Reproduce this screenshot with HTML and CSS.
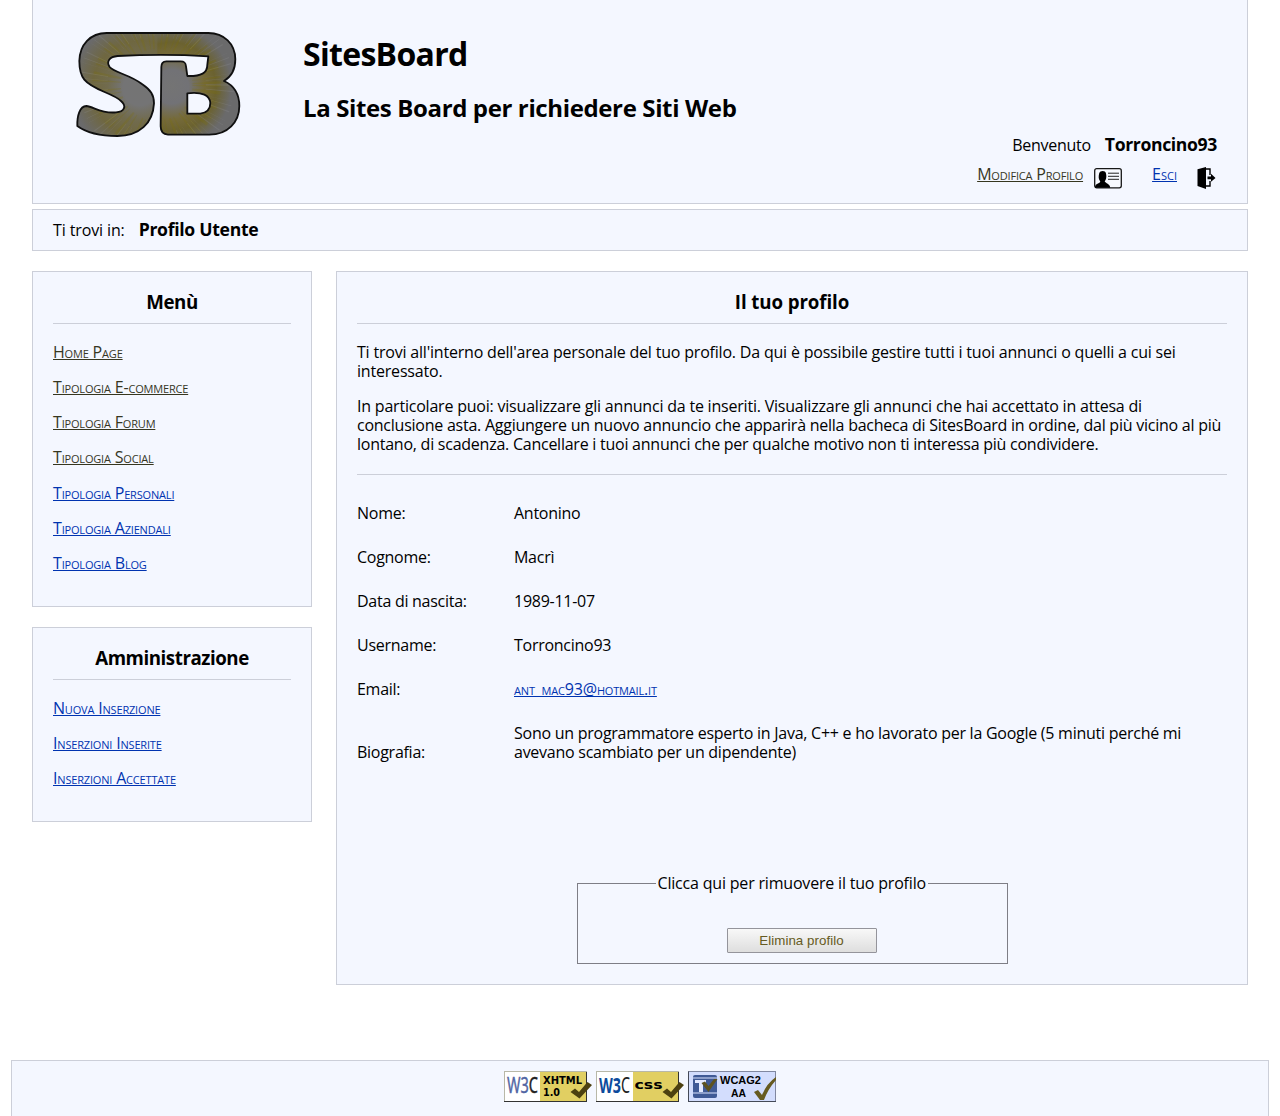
FILE: index.html
```html
<!DOCTYPE html>
<html lang="it">
<head>
<meta charset="utf-8">
<title>SitesBoard - Profilo Utente</title>
<link rel="stylesheet" href="styles.css">
</head>
<body>
<header class="box header">
  <svg class="logo" viewBox="165 90 500 325" role="img" aria-label="SitesBoard">
    <defs>
      <radialGradient id="glowS" gradientUnits="userSpaceOnUse" cx="360" cy="265" r="205">
        <stop offset="0" stop-color="#747474"/><stop offset=".25" stop-color="#747475"/><stop offset=".48" stop-color="#716b4d"/><stop offset=".7" stop-color="#6f6740"/><stop offset="1" stop-color="#6a6a6b"/>
      </radialGradient>
      <radialGradient id="glowB" gradientUnits="userSpaceOnUse" cx="455" cy="260" r="205">
        <stop offset="0" stop-color="#747474"/><stop offset=".25" stop-color="#727276"/><stop offset=".48" stop-color="#756a3a"/><stop offset=".65" stop-color="#6b6230"/><stop offset=".88" stop-color="#6a6a6b"/>
      </radialGradient>
      <clipPath id="right"><rect x="412" y="80" width="260" height="340"/></clipPath>
      <clipPath id="shape"><use href="#sb" clip-rule="evenodd"/></clipPath>
      <path id="sb" d="M260 99H565C612 99 646 132 646 178C646 209 633 231 612 243C641 256 658 283 658 318C658 366 623 404 568 404H444C428 403 422 395 422 379L424 201C424 189 429 184 439 184H482C494 184 497 188 498 199L502 228C544 229 562 219 562 194L565 169C470 163 390 163 293 168C268 170 258 185 269 201C282 218 331 224 367 253C392 270 402 285 402 310C399 370 358 408 292 408C244 408 202 400 172 378C171 348 179 319 199 318C221 320 245 342 288 337C313 336 321 318 303 303C279 279 219 271 193 239C182 225 178 208 178 183C179 134 211 99 260 99ZM502 280V341H541C562 338 571 326 571 309C569 286 548 275 502 280Z"/>
    </defs>
    <use href="#sb" fill="url(#glowS)" fill-rule="evenodd"/>
    <use href="#sb" fill="url(#glowB)" fill-rule="evenodd" clip-path="url(#right)"/>
    <g clip-path="url(#shape)" fill="none" stroke-width="85">
      <circle cx="410" cy="255" r="150" stroke="#807300" stroke-opacity=".22" stroke-dasharray="4 11 8 17 3 9 6 22"/>
      <circle cx="410" cy="255" r="190" stroke="#96969b" stroke-opacity=".22" stroke-dasharray="2 13 3 22 1 10"/>
    </g>
    <use href="#sb" fill="none" stroke="#101010" stroke-width="5.5" stroke-linejoin="round"/>
  </svg>
  <div class="titles">
    <h1>SitesBoard</h1>
    <h2>La Sites Board per richiedere Siti Web</h2>
  </div>
  <div class="account">
    <p class="welcome"><span>Benvenuto</span><strong>Torroncino93</strong></p>
    <div class="actions">
      <a class="visited edit" href="#">Modifica Profilo</a>
      <svg class="card-icon" width="28" height="21" viewBox="0 0 28 21"><rect x=".7" y=".7" width="26.6" height="19.1" rx="2" fill="#f8faff" stroke="#171717" stroke-width="1.3"/><path d="M1 19.7C1 15 6 15.8 6.3 13.5C4.5 11.5 4.3 8.5 5.2 5.2C6 2.4 11.3 2 12 5.4C12.9 9 12 11.7 10.7 13.5C11.5 15.2 16 15.6 16.2 19.7Z"/><path d="M14 5.2H25M14 8.3H25M14 11.3H25" stroke="#222" stroke-width="1"/></svg>
      <a class="exit" href="#">Esci</a>
      <svg class="exit-icon" width="19" height="22" viewBox="0 0 19 22"><path d="M.5 2.2L9 0V22L.5 19Z"/><path d="M9 2H13V8M13 14V19H9" fill="none" stroke="#000" stroke-width="1.4"/><path d="M10.500 9.600H14V6.800L18.500 11L14 14.800V12.300H10.500Z"/></svg>
    </div>
  </div>
</header>
<nav class="box crumb"><span>Ti trovi in:</span><strong>Profilo Utente</strong></nav>
<div class="columns">
  <aside class="sidebar">
    <section class="box panel">
      <h3>Menù</h3>
      <ul>
        <li><a class="visited" href="#">Home Page</a></li>
        <li><a class="visited" href="#">Tipologia E-commerce</a></li>
        <li><a class="visited" href="#">Tipologia Forum</a></li>
        <li><a class="visited" href="#">Tipologia Social</a></li>
        <li><a href="#">Tipologia Personali</a></li>
        <li><a href="#">Tipologia Aziendali</a></li>
        <li><a href="#">Tipologia Blog</a></li>
      </ul>
    </section>
    <section class="box panel">
      <h3>Amministrazione</h3>
      <ul>
        <li><a href="#">Nuova Inserzione</a></li>
        <li><a href="#">Inserzioni Inserite</a></li>
        <li><a href="#">Inserzioni Accettate</a></li>
      </ul>
    </section>
  </aside>
  <main class="box content">
    <h3>Il tuo profilo</h3>
    <div class="intro">
      <p class="lead">Ti trovi all'interno dell'area personale del tuo profilo. Da qui è possibile gestire tutti i tuoi annunci o quelli a cui sei<br>interessato.</p>
      <p class="details"><span class="first">In particolare puoi: visualizzare gli annunci da te inseriti. Visualizzare gli annunci che hai accettato in attesa di</span><br>conclusione asta. Aggiungere un nuovo annuncio che apparirà nella bacheca di SitesBoard in ordine, dal più vicino al più<br>lontano, di scadenza. Cancellare i tuoi annunci che per qualche motivo non ti interessa più condividere.</p>
    </div>
    <dl class="data">
      <dt>Nome:</dt><dd>Antonino</dd>
      <dt>Cognome:</dt><dd>Macrì</dd>
      <dt>Data di nascita:</dt><dd>1989-11-07</dd>
      <dt>Username:</dt><dd>Torroncino93</dd>
      <dt>Email:</dt><dd><a href="#">ant_mac93@hotmail.it</a></dd>
      <dt>Biografia:</dt><dd class="bio">Sono un programmatore esperto in Java, C++ e ho lavorato per la Google (5 minuti perché mi<br>avevano scambiato per un dipendente)</dd>
    </dl>
    <fieldset>
      <legend>Clicca qui per rimuovere il tuo profilo</legend>
      <button type="button">Elimina profilo</button>
    </fieldset>
  </main>
</div>
<footer class="box footer">
  <svg width="88" height="31" viewBox="0 0 88 31">
    <rect width="83" height="31" fill="#b8b8a8"/><rect x="1" y="1" width="81" height="29" fill="#fff"/><rect x="36" y="1" width="46" height="29" fill="#e1cf62"/><path d="M0 30.5H83M82.5 1V31" stroke="#333" fill="none"/>
    <text class="w3 outlined" x="3" y="22" textLength="31" lengthAdjust="spacingAndGlyphs" fill="#5266a4" stroke="#5266a4">W3<tspan fill="#222" stroke="#222">C</tspan></text>
    <text class="tag" x="39" y="13" textLength="39" lengthAdjust="spacingAndGlyphs">XHTML</text><text class="tag" x="39" y="24.500" textLength="17" lengthAdjust="spacingAndGlyphs">1.0</text>
    <path d="M66.500 21L71 17.500L75 21L83.500 11L88 14L75.500 27.500Z" fill="#4c4010"/>
  </svg>
  <svg width="88" height="31" viewBox="0 0 88 31">
    <rect width="83" height="31" fill="#b8b8a8"/><rect x="1" y="1" width="81" height="29" fill="#fff"/><rect x="37" y="1" width="45" height="29" fill="#e1cf62"/><path d="M0 30.500H83M82.500 1V31" stroke="#333" fill="none"/>
    <text class="w3" x="3" y="22" textLength="31" lengthAdjust="spacingAndGlyphs" fill="#0c4b9c"><tspan class="strong">W3</tspan><tspan fill="#222">C</tspan></text>
    <text class="tag css" x="38.500" y="18" textLength="28" lengthAdjust="spacingAndGlyphs">css</text>
    <path d="M66.500 21L71 17.500L75 21L83.500 11L88 14L75.500 27.500Z" fill="#4c4010"/>
  </svg>
  <svg width="88" height="31" viewBox="0 0 88 31">
    <rect x=".5" y=".5" width="87" height="30" fill="#d3ddfd" stroke="#8087a0"/><path d="M.5 31V.5M0 30.500H88" stroke="#444957"/>
    <rect x="5" y="4" width="24" height="23" rx="2" fill="#405a96"/><path d="M5 7H29M5 22H29" stroke="#dbe4ff" stroke-width="1.2"/><path d="M7 9H18V12H15V21H11V12H7Z" fill="#e4eaff"/><path d="M13.500 12L17 10.500L20.500 15L26 8H29.500L20.500 21Z" fill="#5d5220"/>
    <text class="wcag" x="32" y="13" textLength="41" lengthAdjust="spacingAndGlyphs">WCAG2</text><text class="wcag" x="43" y="26" textLength="15" lengthAdjust="spacingAndGlyphs">AA</text>
    <path d="M66 21L70 19L74 24Q79 12 88 6V9Q80 18 76 29H72Z" fill="#665a20"/>
  </svg>
</footer>
</body>
</html>
```
FILE: styles.css
```css
* { box-sizing: border-box; }
body { margin: 0; height: 1116px; overflow: hidden; background: #fff; color: #000; font: 16px/19px "Open Sans", "Noto Sans", sans-serif; letter-spacing: -.27px; }
h1, h2, h3, p, ul, dl, dd { margin: 0; padding: 0; }
.box { background: #f4f7ff; border: 1px solid #cccfd9; }
a { color: #0033b0; font-variant: small-caps; text-underline-offset: 1px; text-decoration-thickness: 1px; text-decoration-skip-ink: none; letter-spacing: -.18px; }
a.visited { color: #36361f; }
.header { display: grid; grid-template-columns: 270px 1fr; grid-template-rows: 138px 1fr; height: 204px; margin: 0 32px; border-top: 0; }
.logo { width: 166.670px; height: 108.330px; margin: 30px 0 0 42px; }
.titles { padding-top: 35px; }
h1 { font-size: 32px; line-height: 38px; letter-spacing: -.7px; }
h2 { margin-top: 20px; font-size: 24px; line-height: 29px; letter-spacing: -.37px; }
.account { grid-column: 1 / 3; justify-self: end; margin-right: 30px; }
.welcome { display: flex; gap: 14px; justify-content: flex-end; margin-top: -2px; }
.welcome strong, .crumb strong { margin-top: -1px; font-size: 17.600px; letter-spacing: -.3px; }
.welcome strong { letter-spacing: -.36px; }
.actions { display: flex; margin-top: 10px; align-items: flex-start; }
.card-icon { margin: 3px 30px 0 11px; }
.exit-icon { margin: 2px 1px 0 20px; }
.exit { letter-spacing: 0; }
.crumb { display: flex; gap: 14px; height: 42px; margin: 5px 32px 0; padding: 11px 20px; letter-spacing: -.12px; }
.columns { display: flex; align-items: flex-start; gap: 24px; margin: 20px 32px 0; }
.sidebar { display: flex; flex-direction: column; gap: 20px; width: 280px; }
.panel { padding: 19px 20px 33px; }
h3 { padding-bottom: 10px; border-bottom: 1px solid #cccfd9; font-size: 18.720px; line-height: 22px; text-align: center; letter-spacing: -.45px; }
ul { display: flex; flex-direction: column; gap: 16.140px; margin-top: 19px; list-style: none; }
.content { flex: 1; height: 714px; padding: 19px 20px 20px; }
.content h3 { letter-spacing: -.1px; }
.intro { display: flex; flex-direction: column; gap: 16px; padding: 19px 0 20px; border-bottom: 1px solid #cccfd9; white-space: nowrap; }
.lead { letter-spacing: -.195px; }
.details { letter-spacing: -.245px; }
.first { letter-spacing: -.21px; }
.data { display: grid; grid-template-columns: 157px 1fr; row-gap: 25px; align-items: end; margin-top: 29px; white-space: nowrap; }
.bio { letter-spacing: -.258px; }
fieldset { display: block; width: 431px; height: 90px; margin: 112px auto 0; padding: 35px 0 0 149px; border: 1px solid #7e7e86; }
legend { margin-left: -71px; padding: 0 2px; letter-spacing: -.19px; }
button { display: block; width: 150px; height: 25px; padding: 0; border: 1px solid #94949b; border-radius: 1px; background: linear-gradient(#f8f8f8, #dedede); color: #665b22; font: 13.333px "Liberation Sans", Arial, sans-serif; letter-spacing: .04px; }
.footer { display: flex; justify-content: center; gap: 4px; height: 80px; margin: 75px 11px 0; padding-top: 10px; }
.w3 { font: 21px "Noto Sans", sans-serif; letter-spacing: 0; }
.outlined { stroke-width: .4px; }
.strong { font-weight: bold; }
.tag { font: bold 10px "DejaVu Sans", sans-serif; letter-spacing: 0; }
.css { font-size: 12px; }
.wcag { font: bold 11px "Liberation Sans", Arial, sans-serif; letter-spacing: 0; }
```
